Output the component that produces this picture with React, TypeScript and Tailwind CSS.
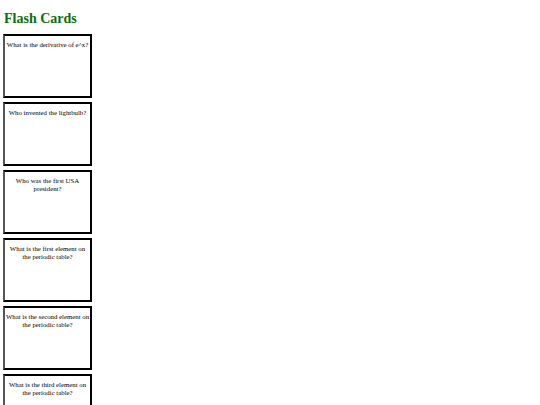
const CARDS = [
  'What is the derivative of e^x?',
  'Who invented the lightbulb?',
  'Who was the first USA president?',
  'What is the first element on the periodic table?',
  'What is the second element on the periodic table?',
  'What is the third element on the periodic table?',
]

export default function App() {
  return (
    <div className="min-h-screen bg-white pl-[3px] pt-[9px] font-['Liberation_Serif',serif]">
      <h1 className="pl-[1px] text-[14px] font-bold leading-[20px] text-[#0a6e0a]">Flash Cards</h1>
      <div className="mt-[5px] flex flex-col gap-[4px]">
        {CARDS.map((q) => (
          <div
            key={q}
            className="h-[64px] w-[89px] border-2 border-black border-l-[#555] pt-[5px] text-center text-[6.8px] leading-[8px] text-black"
          >
            {q}
          </div>
        ))}
      </div>
    </div>
  )
}
